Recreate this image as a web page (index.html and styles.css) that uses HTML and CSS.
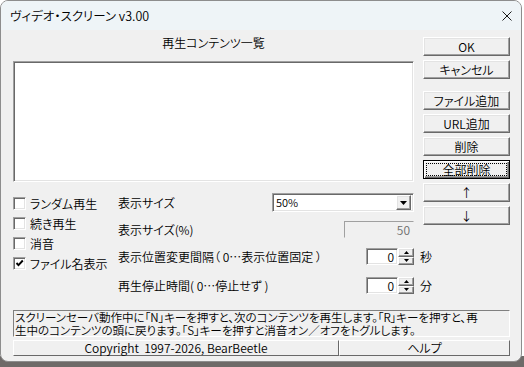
FILE: index.html
```html
<!DOCTYPE html>
<html lang="ja">
<head>
<meta charset="utf-8">
<title>ヴィデオ・スクリーン v3.00</title>
<link rel="stylesheet" href="styles.css">
</head>
<body>
<div class="window">
  <div class="titlebar">
    <span class="title">ヴィデオ・スクリーン v3.00</span>
    <svg class="close" width="10" height="10" viewBox="0 0 10 10"><path d="M0.5 0.5 L9.5 9.5 M9.5 0.5 L0.5 9.5" stroke="#1a1a1a" stroke-width="1" fill="none"/></svg>
  </div>
  <div class="client">
    <div class="main">
      <div class="left">
        <div class="heading">再生コンテンツ一覧</div>
        <div class="listbox sunken"></div>
        <div class="lower">
          <div class="checks">
            <div class="check"><span class="box sunken"></span><span>ランダム再生</span></div>
            <div class="check"><span class="box sunken"></span><span>続き再生</span></div>
            <div class="check"><span class="box sunken"></span><span>消音</span></div>
            <div class="check"><span class="box sunken"><svg width="9" height="9" viewBox="0 0 9 9"><path d="M1.5 4 L3.5 6.2 L7.8 1.5" stroke="#000" stroke-width="1.9" fill="none"/></svg></span><span>ファイル名表示</span></div>
          </div>
          <div class="settings">
            <div class="srow r1">
              <span class="lbl">表示サイズ</span>
              <div class="combo sunken"><span class="ctext">50%</span><span class="cbtn raised"><svg width="7" height="4" viewBox="0 0 7 4"><path d="M0 0 H7 L3.5 4 Z" fill="#000"/></svg></span></div>
              <span class="unit"></span>
            </div>
            <div class="srow r2">
              <span class="lbl">表示サイズ(%)</span>
              <div class="edit disabled sunken">50</div>
              <span class="unit"></span>
            </div>
            <div class="srow r3">
              <span class="lbl">表示位置変更間隔（ 0…表示位置固定 ）</span>
              <div class="spin"><div class="edit sunken">0</div><div class="spinbtns"><span class="sbtn raised"><svg width="5" height="3" viewBox="0 0 5 3"><path d="M2.5 0 L5 3 H0 Z" fill="#000"/></svg></span><span class="sbtn raised"><svg width="5" height="3" viewBox="0 0 5 3"><path d="M0 0 H5 L2.5 3 Z" fill="#000"/></svg></span></div></div>
              <span class="unit">秒</span>
            </div>
            <div class="srow r4">
              <span class="lbl">再生停止時間( 0…停止せず )</span>
              <div class="spin"><div class="edit sunken">0</div><div class="spinbtns"><span class="sbtn raised"><svg width="5" height="3" viewBox="0 0 5 3"><path d="M2.5 0 L5 3 H0 Z" fill="#000"/></svg></span><span class="sbtn raised"><svg width="5" height="3" viewBox="0 0 5 3"><path d="M0 0 H5 L2.5 3 Z" fill="#000"/></svg></span></div></div>
              <span class="unit">分</span>
            </div>
          </div>
        </div>
      </div>
      <div class="buttons">
        <div class="btn raised">OK</div>
        <div class="btn raised">キャンセル</div>
        <div class="btn raised sep">ファイル追加</div>
        <div class="btn raised">URL追加</div>
        <div class="btn raised">削除</div>
        <div class="btn default"><span class="focus">全部削除</span></div>
        <div class="btn raised">↑</div>
        <div class="btn raised">↓</div>
      </div>
    </div>
    <div class="info"><div class="iline">スクリーンセーバ動作中に「N」キーを押すと、次のコンテンツを再生します。「R」キーを押すと、再</div><div class="iline">生中のコンテンツの頭に戻ります。「S」キーを押すと消音オン／オフをトグルします。</div></div>
    <div class="footer">
      <div class="panel copy">Copyright&nbsp;&nbsp;1997-2026, BearBeetle</div>
      <div class="panel help">ヘルプ</div>
    </div>
  </div>
</div>
</body>
</html>
```

FILE: styles.css
```css
html, body {
  margin: 0;
  padding: 0;
}
body {
  width: 524px;
  height: 367px;
  overflow: hidden;
  background: linear-gradient(#ffffff 0 356px, #6e6a68 356px);
  font-family: "Noto Sans CJK JP", "Noto Sans", sans-serif;
  font-size: 12px;
  font-weight: 350;
  font-feature-settings: "palt";
  color: #000;
}
.window {
  width: 522px;
  height: 362px;
  box-sizing: border-box;
  border: 1px solid #8d8d8d;
  border-radius: 8px;
  overflow: hidden;
  background: #f0f0f0;
  display: flex;
  flex-direction: column;
}
.titlebar {
  height: 29px;
  flex: none;
  background: #eef4f7;
  display: flex;
  align-items: center;
  padding-left: 9px;
}
.title {
  font-size: 12.5px;
  line-height: 14px;
}
.close {
  margin-left: auto;
  margin-right: 9px;
}
.client {
  padding: 0 11px 0 12px;
}
.main {
  display: grid;
  grid-template-columns: 401px 87px;
  column-gap: 9px;
}
.sunken {
  box-sizing: border-box;
  border: 1px solid;
  border-color: #a0a0a0 #ffffff #ffffff #a0a0a0;
  box-shadow: inset 1px 1px #696969, inset -1px -1px #e3e3e3;
}
.raised {
  box-sizing: border-box;
  border: 1px solid;
  border-color: #ffffff #696969 #696969 #ffffff;
  box-shadow: inset -1px -1px #a0a0a0, inset 1px 1px #e3e3e3;
  background: #f0f0f0;
}
.heading {
  height: 31px;
  box-sizing: border-box;
  padding-top: 6px;
  line-height: 14px;
  text-align: center;
}
.listbox {
  height: 121px;
  background: #ffffff;
}
.lower {
  margin-top: 11px;
  display: flex;
}
.checks {
  width: 105px;
  flex: none;
  display: flex;
  flex-direction: column;
  gap: 7px;
  padding-top: 4px;
}
.check {
  display: flex;
  align-items: center;
  height: 13px;
  gap: 4px;
  line-height: 13px;
  white-space: nowrap;
}
.box {
  width: 13px;
  height: 13px;
  flex: none;
  background: #ffffff;
  display: flex;
  align-items: center;
  justify-content: center;
}
.settings {
  flex: 1;
  display: flex;
  flex-direction: column;
  margin-right: -24px;
}
.srow {
  display: flex;
  align-items: center;
  white-space: nowrap;
}
.r1 { height: 19px; }
.r2 { height: 17px; margin-top: 9px; }
.r3 { height: 17px; margin-top: 10px; }
.r4 { height: 17px; margin-top: 12px; }
.lbl {
  line-height: 14px;
}
.combo, .edit, .spin {
  margin-left: auto;
}
.unit {
  width: 24px;
  flex: none;
  box-sizing: border-box;
  padding-left: 6px;
  line-height: 14px;
}
.combo {
  width: 142px;
  height: 19px;
  background: #ffffff;
  display: flex;
  align-items: center;
  padding: 2px;
}
.ctext {
  flex: 1;
  padding-left: 1px;
  font-size: 11px;
  line-height: 13px;
}
.cbtn {
  width: 15px;
  height: 15px;
  display: flex;
  align-items: center;
  justify-content: center;
}
.edit {
  height: 17px;
  background: #ffffff;
  text-align: right;
  padding-right: 3px;
  line-height: 15px;
  font-size: 12px;
}
.edit.disabled {
  width: 70px;
  background: #f0f0f0;
  color: #6d6d6d;
  border-color: #a0a0a0 #f0f0f0 #f0f0f0 #a0a0a0;
  box-shadow: none;
}
.spin {
  display: flex;
}
.spin .edit {
  width: 32px;
  margin-left: 0;
}
.spinbtns {
  width: 16px;
  height: 17px;
  display: flex;
  flex-direction: column;
}
.sbtn {
  flex: 1;
  display: flex;
  align-items: center;
  justify-content: center;
}
.buttons {
  display: flex;
  flex-direction: column;
  gap: 4px;
  padding-top: 7px;
}
.btn {
  height: 19px;
  display: flex;
  align-items: center;
  justify-content: center;
  line-height: 14px;
  white-space: nowrap;
}
.btn.sep {
  margin-top: 8px;
}
.btn.default {
  box-sizing: border-box;
  border: 1px solid #000;
  background: #f0f0f0;
  box-shadow: inset 1px 1px #ffffff, inset -1px -1px #696969, inset -2px -2px #a0a0a0;
  padding: 3px;
}
.focus {
  flex: 1;
  align-self: stretch;
  display: flex;
  align-items: center;
  justify-content: center;
  outline: 1px dotted #000;
  outline-offset: 0;
}
.info {
  margin-top: 16px;
  height: 27px;
  box-sizing: border-box;
  border: 1px solid;
  border-color: #808080 #ffffff #ffffff #808080;
  padding: 0 1px;
  white-space: nowrap;
  overflow: hidden;
  font-size: 11.6px;
  letter-spacing: -0.1px;
}
.iline {
  height: 12.5px;
  line-height: 12.5px;
}
.footer {
  margin-top: 3px;
  display: flex;
  height: 16px;
}
.panel {
  box-sizing: border-box;
  border: 1px solid;
  border-color: #ffffff #696969 #696969 #ffffff;
  display: flex;
  align-items: center;
  justify-content: center;
  line-height: 14px;
}
.copy {
  width: 326px;
}
.help {
  flex: 1;
}
```
